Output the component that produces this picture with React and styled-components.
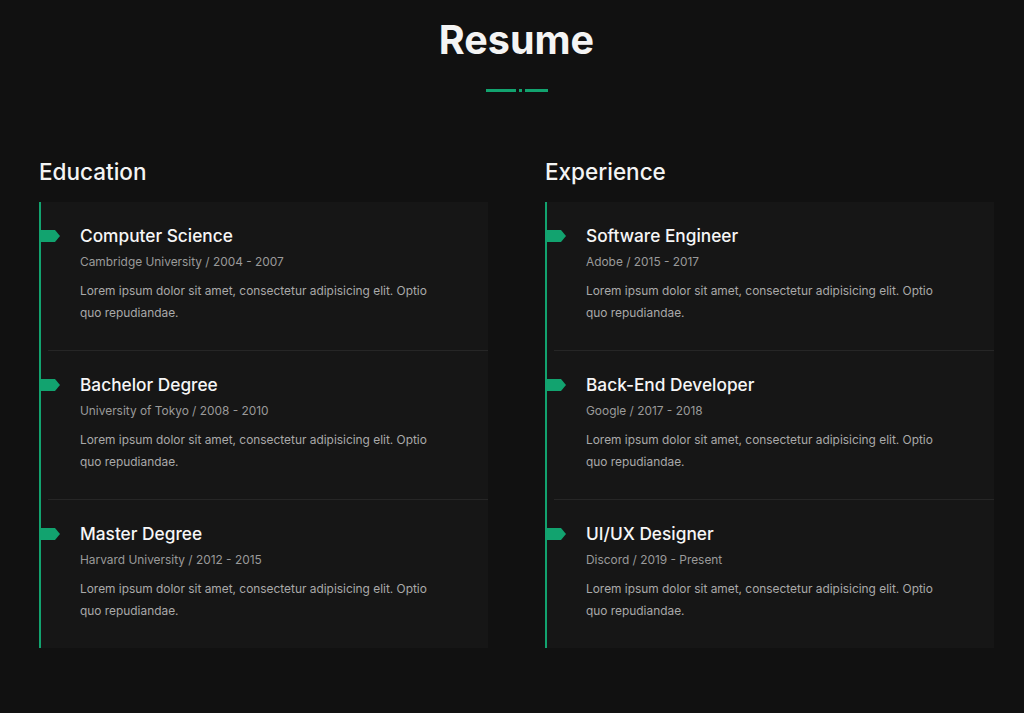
import React from "react";
import styled, { createGlobalStyle } from "styled-components";

const GlobalStyle = createGlobalStyle`
  html, body {
    margin: 0;
    padding: 0;
    background: #111111;
  }
  body {
    font-family: "Inter", "Open Sans", sans-serif;
    color: #f2f2f2;
  }
`;

const GREEN = "#12a36f";

const Section = styled.section`
  min-height: 713px;
  padding: 16px 30px 0 39px;
  box-sizing: border-box;
`;

const Header = styled.div`
  display: flex;
  flex-direction: column;
  align-items: center;
`;

const Title = styled.h2`
  margin: 0;
  font-size: 39.5px;
  line-height: 48px;
  font-weight: 700;
  color: #f4f4f4;
`;

const Divider = styled.div`
  display: flex;
  align-items: center;
  gap: 3px;
  margin-top: 25px;
`;

const Bar = styled.span`
  display: block;
  width: ${(p) => p.$w}px;
  height: 3px;
  background: ${GREEN};
`;

const Columns = styled.div`
  display: grid;
  grid-template-columns: 449px 449px;
  column-gap: 57px;
  margin-top: 67px;
`;

const Column = styled.div`
  display: flex;
  flex-direction: column;
`;

const Heading = styled.h3`
  margin: 0 0 17px;
  font-size: 22.5px;
  line-height: 26px;
  font-weight: 500;
  color: #f4f4f4;
`;

const Timeline = styled.div`
  border-left: 2px solid ${GREEN};
  background: #161616;
`;

const Item = styled.div`
  position: relative;
  padding-left: 7px;
`;

const Marker = styled.span`
  position: absolute;
  left: -2px;
  top: 28px;
  width: 21px;
  height: 12px;
  background: ${GREEN};
  clip-path: polygon(0 0, 16px 0, 21px 50%, 16px 100%, 0 100%);
`;

const Inner = styled.div`
  padding: 22px 40px 26px 32px;
  border-bottom: ${(p) => (p.$last ? "none" : "1px solid #262626")};
`;

const ItemTitle = styled.h4`
  margin: 0;
  font-size: 17.3px;
  line-height: 24px;
  font-weight: 500;
  color: #f6f6f6;
`;

const Meta = styled.div`
  margin-top: 4px;
  font-size: 11.9px;
  line-height: 20px;
  color: #9a9a9a;
`;

const Text = styled.p`
  margin: 8px 0 0;
  font-size: 11.9px;
  line-height: 22px;
  color: #a9a9a9;
  max-width: 362px;
`;

const lorem =
  "Lorem ipsum dolor sit amet, consectetur adipisicing elit. Optio quo repudiandae.";

const education = [
  { title: "Computer Science", meta: "Cambridge University / 2004 - 2007" },
  { title: "Bachelor Degree", meta: "University of Tokyo / 2008 - 2010" },
  { title: "Master Degree", meta: "Harvard University / 2012 - 2015" },
];

const experience = [
  { title: "Software Engineer", meta: "Adobe / 2015 - 2017" },
  { title: "Back-End Developer", meta: "Google / 2017 - 2018" },
  { title: "UI/UX Designer", meta: "Discord / 2019 - Present" },
];

function ResumeColumn({ heading, items }) {
  return (
    <Column>
      <Heading>{heading}</Heading>
      <Timeline>
        {items.map((it, i) => (
          <Item key={it.title}>
            <Marker />
            <Inner $last={i === items.length - 1}>
              <ItemTitle>{it.title}</ItemTitle>
              <Meta>{it.meta}</Meta>
              <Text>{lorem}</Text>
            </Inner>
          </Item>
        ))}
      </Timeline>
    </Column>
  );
}

export default function App() {
  return (
    <>
      <GlobalStyle />
      <Section>
        <Header>
          <Title>Resume</Title>
          <Divider>
            <Bar $w={30} />
            <Bar $w={3} />
            <Bar $w={23} />
          </Divider>
        </Header>
        <Columns>
          <ResumeColumn heading="Education" items={education} />
          <ResumeColumn heading="Experience" items={experience} />
        </Columns>
      </Section>
    </>
  );
}
